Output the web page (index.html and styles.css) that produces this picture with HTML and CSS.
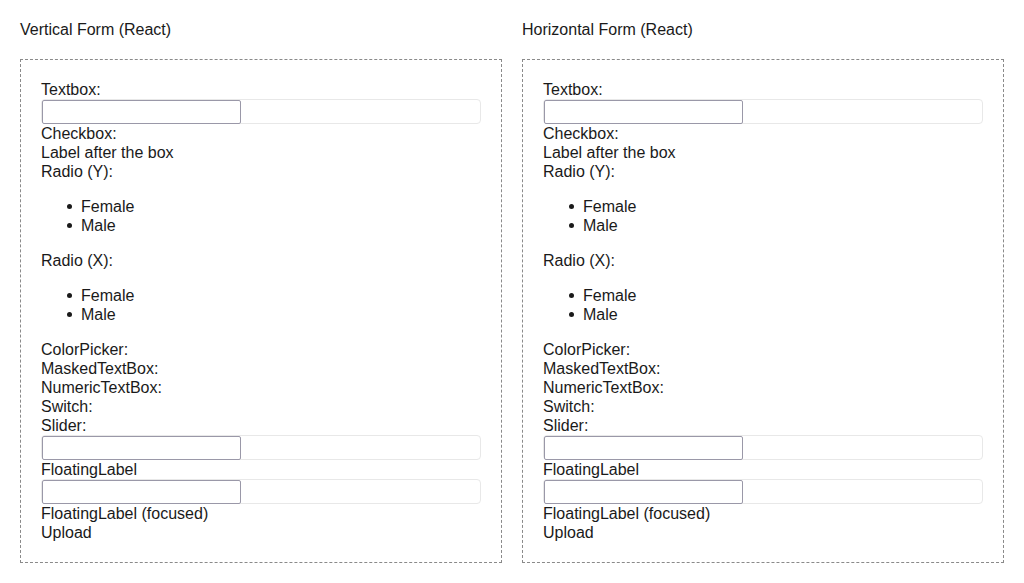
FILE: index.html
```html
<!DOCTYPE html>
<html>
<head>
<meta charset="utf-8">
<link rel="stylesheet" href="styles.css">
</head>
<body>
<div class="page">
  <section class="col">
    <h3 class="title">Vertical Form (React)</h3>
    <div class="box">
      <div class="lbl">Textbox:</div>
      <div class="field"><input class="inp" type="text"></div>
      <div class="lbl">Checkbox:</div>
      <div class="lbl">Label after the box</div>
      <div class="lbl">Radio (Y):</div>
      <ul class="list"><li>Female</li><li>Male</li></ul>
      <div class="lbl">Radio (X):</div>
      <ul class="list"><li>Female</li><li>Male</li></ul>
      <div class="lbl">ColorPicker:</div>
      <div class="lbl">MaskedTextBox:</div>
      <div class="lbl">NumericTextBox:</div>
      <div class="lbl">Switch:</div>
      <div class="lbl">Slider:</div>
      <div class="field"><input class="inp" type="text"></div>
      <div class="lbl">FloatingLabel</div>
      <div class="field"><input class="inp" type="text"></div>
      <div class="lbl">FloatingLabel (focused)</div>
      <div class="lbl">Upload</div>
    </div>
  </section>
  <section class="col">
    <h3 class="title">Horizontal Form (React)</h3>
    <div class="box">
      <div class="lbl">Textbox:</div>
      <div class="field"><input class="inp" type="text"></div>
      <div class="lbl">Checkbox:</div>
      <div class="lbl">Label after the box</div>
      <div class="lbl">Radio (Y):</div>
      <ul class="list"><li>Female</li><li>Male</li></ul>
      <div class="lbl">Radio (X):</div>
      <ul class="list"><li>Female</li><li>Male</li></ul>
      <div class="lbl">ColorPicker:</div>
      <div class="lbl">MaskedTextBox:</div>
      <div class="lbl">NumericTextBox:</div>
      <div class="lbl">Switch:</div>
      <div class="lbl">Slider:</div>
      <div class="field"><input class="inp" type="text"></div>
      <div class="lbl">FloatingLabel</div>
      <div class="field"><input class="inp" type="text"></div>
      <div class="lbl">FloatingLabel (focused)</div>
      <div class="lbl">Upload</div>
    </div>
  </section>
</div>
</body>
</html>
```
FILE: styles.css
```css
html, body {
  margin: 0;
  padding: 0;
  background: #ffffff;
}
body {
  font-family: "Liberation Sans", Arial, sans-serif;
  font-size: 16px;
  line-height: 19px;
  color: #1a1a1a;
}
.page {
  display: grid;
  grid-template-columns: 1fr 1fr;
  column-gap: 20px;
  padding: 20px;
}
.title {
  margin: 0 0 20px 0;
  font-size: 16px;
  font-weight: normal;
  line-height: 19px;
}
.box {
  border: 1px dashed #8a8a8a;
  padding: 20px;
}
.lbl {
  line-height: 19px;
}
.field {
  display: flex;
  align-items: flex-start;
  height: 23px;
  border: 1px solid #e8e8e8;
  border-radius: 4px;
}
.inp {
  box-sizing: border-box;
  flex: none;
  width: 199px;
  height: 24px;
  margin: 0;
  padding: 0 2px;
  border: 1px solid #9a98a8;
  border-radius: 2px;
  background: #ffffff;
  font: inherit;
  outline: none;
}
.list {
  margin: 16px 0;
  padding-left: 40px;
  list-style: none;
}
.list li {
  position: relative;
  line-height: 19px;
}
.list li::before {
  content: "";
  position: absolute;
  left: -14px;
  top: 7px;
  width: 5px;
  height: 5px;
  border-radius: 50%;
  background: #1a1a1a;
}
```
